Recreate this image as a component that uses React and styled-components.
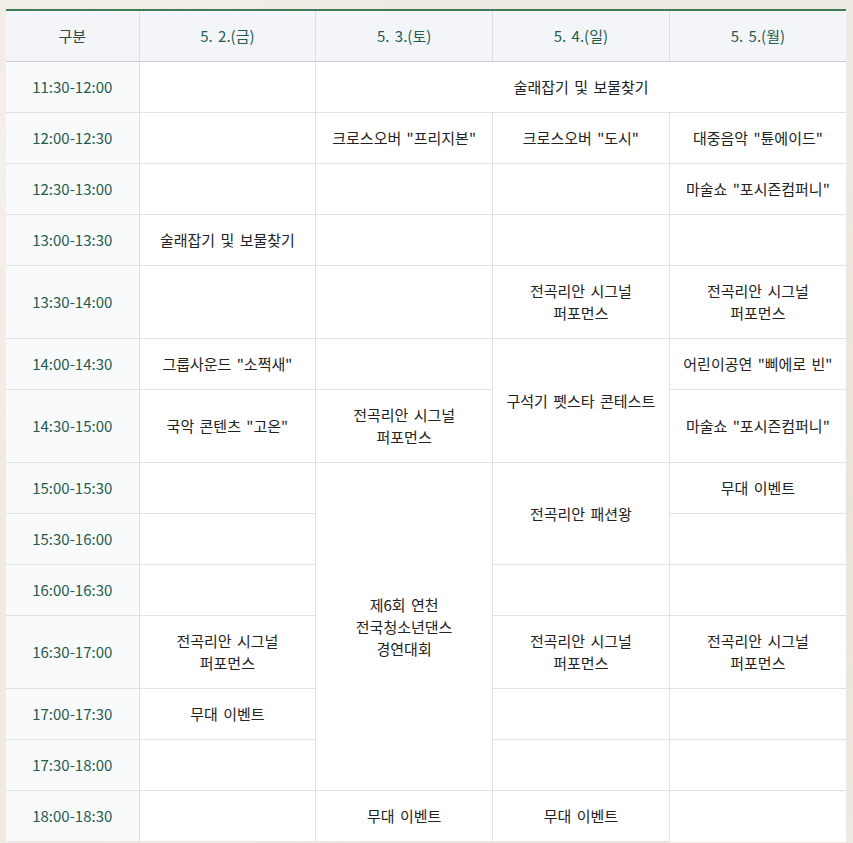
import styled, { createGlobalStyle } from 'styled-components'

const SIGNAL = '전곡리안 시그널\n퍼포먼스'
const STAGE = '무대 이벤트'

const DAYS = ['5. 2.(금)', '5. 3.(토)', '5. 4.(일)', '5. 5.(월)']

// each row: time label + the cells that start in that row (rowspans skip later rows)
const ROWS = [
  { time: '11:30-12:00', cells: [{}, { text: '술래잡기 및 보물찾기', colSpan: 3 }] },
  {
    time: '12:00-12:30',
    cells: [{}, { text: '크로스오버 "프리지본"' }, { text: '크로스오버 "도시"' }, { text: '대중음악 "튠에이드"' }],
  },
  { time: '12:30-13:00', cells: [{}, {}, {}, { text: '마술쇼 "포시즌컴퍼니"' }] },
  { time: '13:00-13:30', cells: [{ text: '술래잡기 및 보물찾기' }, {}, {}, {}] },
  { time: '13:30-14:00', cells: [{}, {}, { text: SIGNAL }, { text: SIGNAL }] },
  {
    time: '14:00-14:30',
    cells: [
      { text: '그룹사운드 "소쩍새"' },
      {},
      { text: '구석기 펫스타 콘테스트', rowSpan: 2 },
      { text: '어린이공연 "삐에로 빈"' },
    ],
  },
  {
    time: '14:30-15:00',
    cells: [{ text: '국악 콘텐츠 "고온"' }, { text: SIGNAL }, { text: '마술쇼 "포시즌컴퍼니"' }],
  },
  {
    time: '15:00-15:30',
    cells: [
      {},
      { text: '제6회 연천\n전국청소년댄스\n경연대회', rowSpan: 6 },
      { text: '전곡리안 패션왕', rowSpan: 2 },
      { text: STAGE },
    ],
  },
  { time: '15:30-16:00', cells: [{}, {}] },
  { time: '16:00-16:30', cells: [{}, {}, {}] },
  { time: '16:30-17:00', cells: [{ text: SIGNAL }, { text: SIGNAL }, { text: SIGNAL }] },
  { time: '17:00-17:30', cells: [{ text: STAGE }, {}, {}] },
  { time: '17:30-18:00', cells: [{}, {}, {}] },
  // last 5.5 cell keeps running below the visible area, so it has no bottom line
  { time: '18:00-18:30', cells: [{}, { text: STAGE }, { text: STAGE }, { open: true }] },
]

const GlobalStyle = createGlobalStyle`
  html, body {
    margin: 0;
    padding: 0;
  }
  body {
    background-color: #efeae1;
    background-image:
      radial-gradient(circle at 15% 20%, rgba(255, 255, 255, 0.4) 0, transparent 35%),
      radial-gradient(circle at 85% 60%, rgba(205, 195, 175, 0.22) 0, transparent 40%),
      radial-gradient(circle at 40% 90%, rgba(255, 255, 255, 0.3) 0, transparent 30%);
    font-family: "Noto Sans CJK KR", "Noto Sans", sans-serif;
  }
`

const Page = styled.div`
  padding: 9px 7px 0 6px;
`

const Table = styled.table`
  width: 840px;
  border-collapse: collapse;
  table-layout: fixed;
  border-top: 2px solid #3e7b59;
  background: #fff;
  font-size: 15px;
  line-height: 22px;
  word-spacing: 2px;
`

const HeadCell = styled.th`
  height: 22px;
  padding: 14px 8px;
  background: #f4f5f9;
  color: #235c4d;
  font-weight: 400;
  text-align: center;
  border-left: 1px solid #dedfe4;
  border-bottom: 1px solid #c9cad6;
  &:first-child {
    border-left: none;
    color: #2f4a42;
  }
`

const TimeCell = styled.td`
  padding: 14px 8px;
  background: #f9fafc;
  color: #235c4d;
  text-align: center;
  word-spacing: 0;
  border-right: 1px solid #dedfe4;
  border-bottom: 1px solid #e2e2e2;
`

const Cell = styled.td`
  padding: 14px 8px;
  color: #222;
  text-align: center;
  vertical-align: middle;
  border: 1px solid #e2e2e2;
  border-top: none;
  border-bottom-color: ${(p) => (p.$open ? 'transparent' : '#e2e2e2')};
  &:last-child {
    border-right: none;
  }
`

const Lines = ({ text }) =>
  text
    ? text.split('\n').map((line, i) => (
        <span key={i}>
          {i > 0 && <br />}
          {line}
        </span>
      ))
    : null

const App = () => (
  <Page>
    <GlobalStyle />
    <Table>
      <colgroup>
        <col style={{ width: 133 }} />
        <col />
        <col />
        <col />
        <col />
      </colgroup>
      <thead>
        <tr>
          <HeadCell>구분</HeadCell>
          {DAYS.map((day) => (
            <HeadCell key={day}>{day}</HeadCell>
          ))}
        </tr>
      </thead>
      <tbody>
        {ROWS.map((row) => (
          <tr key={row.time}>
            <TimeCell>{row.time}</TimeCell>
            {row.cells.map((cell, i) => (
              <Cell key={i} rowSpan={cell.rowSpan} colSpan={cell.colSpan} $open={cell.open}>
                <Lines text={cell.text} />
              </Cell>
            ))}
          </tr>
        ))}
      </tbody>
    </Table>
  </Page>
)

export default App
